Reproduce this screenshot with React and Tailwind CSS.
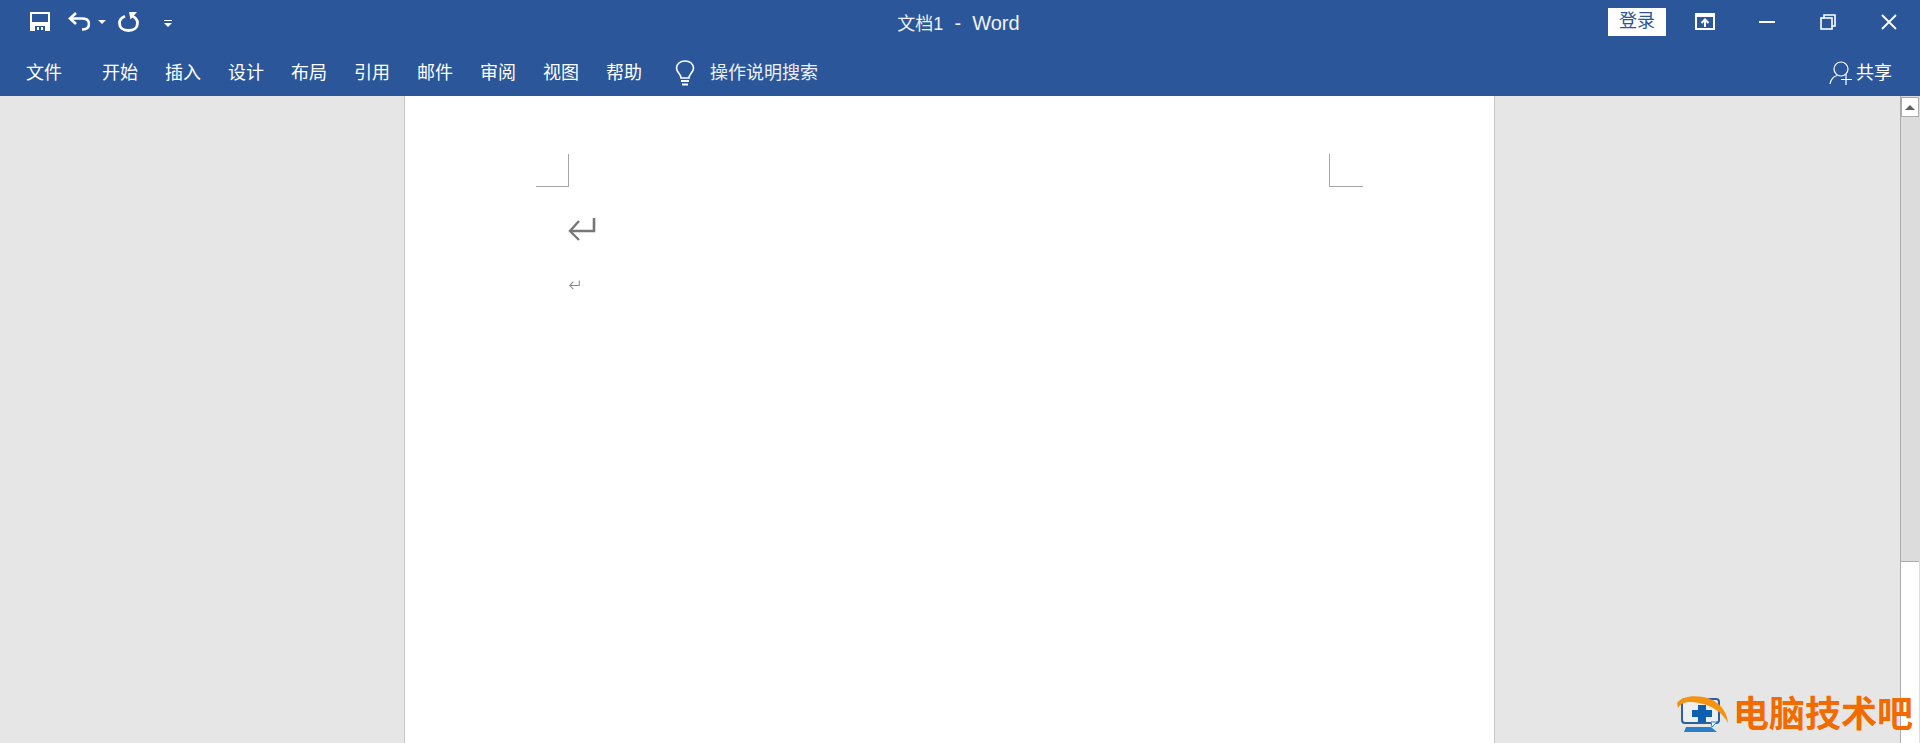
const FONT = "font-['Segoe_UI','Liberation_Sans','Noto_Sans_CJK_SC',sans-serif]";

const TABS = ["开始", "插入", "设计", "布局", "引用", "邮件", "审阅", "视图", "帮助"];

function SaveIcon() {
  return (
    <svg width="20" height="19" viewBox="0 0 20 19" className="block">
      <path d="M0 0H20V19H0Z" fill="#fff" />
      <rect x="2" y="2" width="16" height="8" fill="#2b579a" />
      <rect x="5" y="14" width="10" height="5" fill="#2b579a" />
      <rect x="7" y="15" width="2" height="3" fill="#fff" />
      <rect x="11" y="15" width="2" height="3" fill="#fff" />
    </svg>
  );
}

function UndoIcon() {
  return (
    <svg width="22" height="19" viewBox="0 0 22 19" fill="none" className="block">
      <path d="M8 1L2 6.5L8 12" stroke="#fff" strokeWidth="2.6" />
      <path d="M3 6.5H14C19 6.5 21 9 21 12C21 15.5 18.5 17.5 14 17.5" stroke="#fff" strokeWidth="2.6" />
    </svg>
  );
}

function RepeatIcon() {
  return (
    <svg width="21" height="20" viewBox="0 0 21 20" fill="none" className="block">
      <path d="M7 4.2C3.5 5.5 1.5 8 1.5 11.2C1.5 15.5 5 18.5 10.5 18.5C16 18.5 19.5 15.5 19.5 11.2C19.5 8 17.5 5.5 14 4" stroke="#fff" strokeWidth="2.8" />
      <path d="M11 0H19L12.5 7.5Z" fill="#fff" />
    </svg>
  );
}

function Caret({ className }) {
  return (
    <svg width="8" height="4" viewBox="0 0 8 4" className={className}>
      <path d="M0 0H8L4 4Z" fill="#fff" />
    </svg>
  );
}

function WindowButtons() {
  return (
    <div className="flex items-center">
      <svg width="20" height="17" viewBox="0 0 20 17" fill="none" className="block">
        <rect x="1" y="1" width="18" height="15" stroke="#fff" strokeWidth="2" />
        <rect x="1" y="1" width="18" height="3" fill="#fff" />
        <path d="M10 14V7M6.5 10L10 6.5L13.5 10" stroke="#fff" strokeWidth="2" />
      </svg>
      <svg width="16" height="2" viewBox="0 0 16 2" className="block ml-[44px]">
        <rect width="16" height="2" fill="#fff" />
      </svg>
      <svg width="16" height="16" viewBox="0 0 16 16" fill="none" className="block ml-[45px]">
        <rect x="1" y="4" width="11" height="11" stroke="#fff" strokeWidth="1.6" />
        <path d="M4 4V1H15V12H12" stroke="#fff" strokeWidth="1.6" />
      </svg>
      <svg width="16" height="16" viewBox="0 0 16 16" fill="none" className="block ml-[45px]">
        <path d="M1 1L15 15M15 1L1 15" stroke="#fff" strokeWidth="1.8" />
      </svg>
    </div>
  );
}

function BulbIcon() {
  return (
    <svg width="20" height="27" viewBox="0 0 20 27" fill="none" className="block">
      <path d="M6 18C6 14 1.5 12.5 1.5 8C1.5 4 5 1 10 1C15 1 18.5 4 18.5 8C18.5 12.5 14 14 14 18Z" stroke="#fff" strokeWidth="1.6" />
      <path d="M6 21H14M7 24.5H13" stroke="#fff" strokeWidth="2" />
    </svg>
  );
}

function ShareIcon() {
  return (
    <svg width="24" height="24" viewBox="0 0 24 24" fill="none" className="block">
      <circle cx="12" cy="8" r="7" stroke="#fff" strokeWidth="1.2" />
      <path d="M1 23C2 18 4.5 15.5 8 14.5" stroke="#fff" strokeWidth="1.2" />
      <path d="M17 13V24M12 18.5H23" stroke="#fff" strokeWidth="1.2" />
    </svg>
  );
}

function ReturnMark({ size }) {
  const big = size === "big";
  return (
    <svg width={big ? 28 : 11} height={big ? 23 : 10} viewBox="0 0 28 23" fill="none" className="block">
      <path d="M26 0V13H3" stroke={big ? "#777" : "#888"} strokeWidth={big ? 2.6 : 2.6} />
      <path d="M11 3L2 13L11 22" stroke={big ? "#777" : "#888"} strokeWidth={big ? 2.4 : 2.6} />
    </svg>
  );
}

function WatermarkLogo() {
  return (
    <svg width="52" height="36" viewBox="0 0 52 36" fill="none" className="block">
      <rect x="5" y="3" width="37" height="24" rx="3" fill="#eeeeee" stroke="#2b5f9e" strokeWidth="2" />
      <path d="M21 9H29V14H35V21H29V26H21V21H15V14H21Z" fill="#0f5fb0" />
      <path d="M34 26L40 26L35 31Z" fill="#ffffff" stroke="#2a80c8" strokeWidth="1" />
      <path d="M9 31H34L40 36H7Z" fill="#2a80c8" />
      <path d="M0 7C4 1 15 -1 26 1C39 3 50 13 51 27C45 16 34 9 22 7C13 5.5 6 5 1 12Z" fill="#f5920f" />
    </svg>
  );
}

export default function App() {
  return (
    <div className={`${FONT} relative h-[743px] w-[1920px] overflow-hidden flex flex-col bg-[#e6e6e6]`}>
      <header className="h-[96px] shrink-0 bg-[#2b579a] text-white flex flex-col">
        {/* title row */}
        <div className="h-[48px] grid grid-cols-[1fr_auto_1fr] items-center pl-[30px] pr-[23px] pb-[5px]">
          <div className="flex items-center">
            <SaveIcon />
            <div className="ml-[18px]"><UndoIcon /></div>
            <Caret className="ml-[8px]" />
            <div className="ml-[12px]"><RepeatIcon /></div>
            <div className="ml-[25px] mt-[3px] flex flex-col gap-[2px] items-center">
              <div className="w-[8px] h-[1px] bg-white" />
              <Caret />
            </div>
          </div>
          <div className="whitespace-pre text-[18px] leading-[28px] text-[#f1f1f1] pt-[3px] pr-[10px]">
            文档1<span className="text-[20px]">  -  Word</span>
          </div>
          <div className="flex items-center justify-end">
            <div className="h-[28px] w-[58px] bg-white text-[#2b579a] text-[18px] leading-[26px] text-center mr-[29px]">登录</div>
            <WindowButtons />
          </div>
        </div>
        {/* ribbon tabs */}
        <div className="h-[48px] flex items-center pl-[26px] pr-[28px] text-[18px] leading-[28px] pt-[2px]">
          <span className="mr-[40px]">文件</span>
          <div className="flex gap-[27px]">
            {TABS.map((t) => (
              <span key={t}>{t}</span>
            ))}
          </div>
          <div className="ml-[33px]"><BulbIcon /></div>
          <span className="ml-[15px] text-[#eef1f7]">操作说明搜索</span>
          <div className="ml-auto flex items-center gap-[3px]">
            <ShareIcon />
            <span>共享</span>
          </div>
        </div>
      </header>

      <main className="flex-1 min-h-0 flex">
        <div className="w-[404px] shrink-0" />
        <div className="w-[1091px] shrink-0 bg-white border-x border-[#c6c6c6] pt-[58px] pl-[131px] pr-[131px]">
          <div className="flex justify-between">
            <div className="w-[33px] h-[33px] border-r border-b border-[#a6a6a6]" />
            <div className="w-[34px] h-[33px] border-l border-b border-[#a6a6a6]" />
          </div>
          <div className="pl-[32px] pt-[31px]">
            <ReturnMark size="big" />
            <div className="pt-[39px] pl-[1px]">
              <ReturnMark size="small" />
            </div>
          </div>
        </div>
        <div className="flex-1" />
        <div className="w-[20px] shrink-0 bg-[#dcdcdc] border-l border-[#ababab] flex flex-col pr-[1px]">
          <div className="h-[20px] mt-[1px] bg-white border border-[#ababab] flex items-center justify-center">
            <svg width="10" height="5" viewBox="0 0 10 5"><path d="M0 5L5 0L10 5Z" fill="#606060" /></svg>
          </div>
          <div className="flex-1" />
          <div className="h-[182px] bg-white border-t border-[#ababab]" />
        </div>
      </main>

      {/* watermark sits over the page corner */}
      <div className="absolute left-[1677px] top-[696px] flex items-start gap-[4px]">
        <WatermarkLogo />
        <span className="text-[36px] leading-[36px] font-bold text-[#f26a00] whitespace-nowrap mt-[1px]">电脑技术吧</span>
      </div>
    </div>
  );
}
